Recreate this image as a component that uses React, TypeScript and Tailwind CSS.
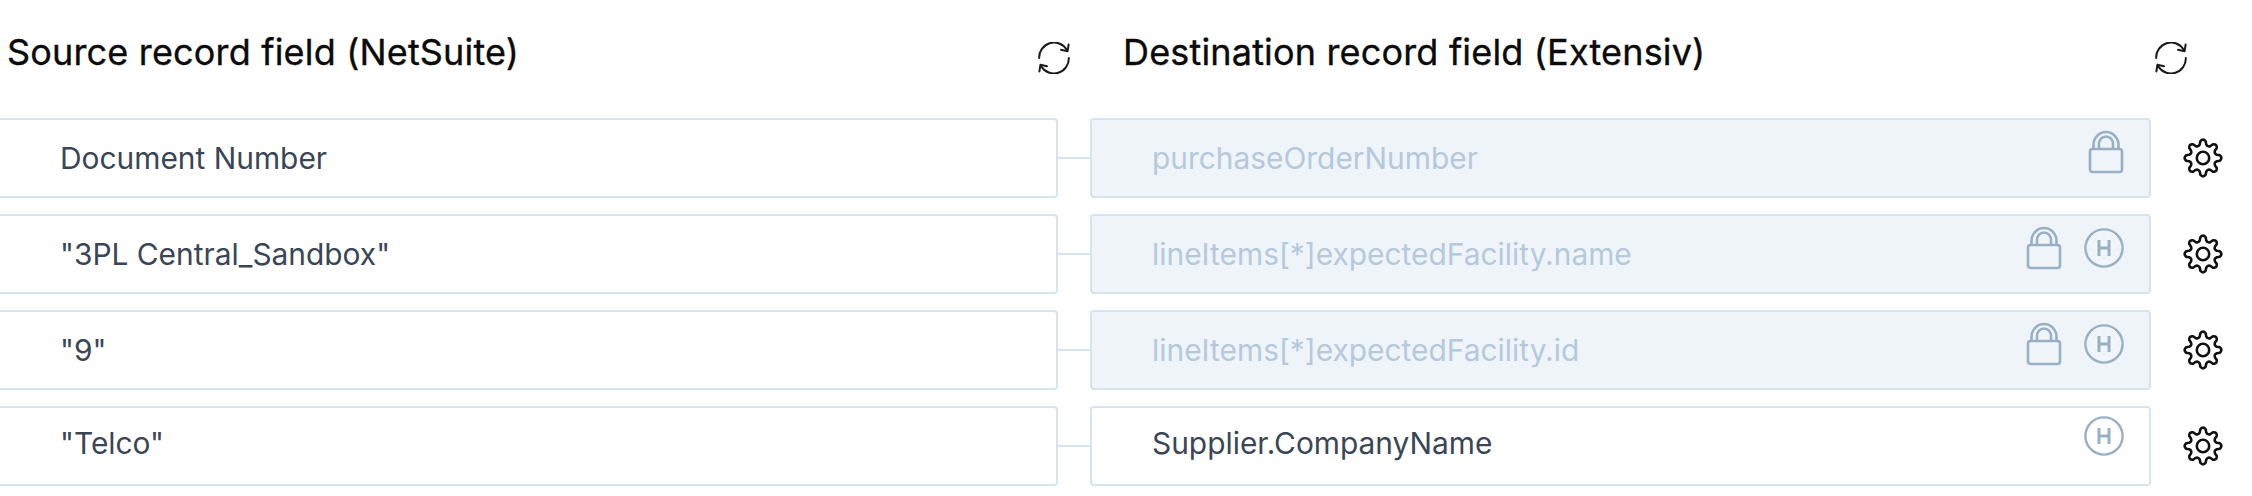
import React from "react";

const gearPath = (() => {
  const cx = 20, cy = 20, R = 18.4, r = 14.2;
  const pt = (rad: number, deg: number) => {
    const a = ((deg - 90) * Math.PI) / 180;
    return `${(cx + rad * Math.cos(a)).toFixed(2)} ${(cy + rad * Math.sin(a)).toFixed(2)}`;
  };
  let d = "";
  for (let i = 0; i < 8; i++) {
    const c = i * 45;
    d += i === 0 ? `M${pt(r, c - 13)}` : ` Q${pt(r - 2.6, c - 22.5)} ${pt(r, c - 13)}`;
    d += ` L${pt(R - 1.4, c - 9)} Q${pt(R + 1.6, c)} ${pt(R - 1.4, c + 9)} L${pt(r, c + 13)}`;
  }
  d += ` Q${pt(r - 2.6, -22.5)} ${pt(r, -13)}Z`;
  return d;
})();

function Gear() {
  return (
    <svg width="40" height="40" viewBox="0 0 40 40" fill="none" stroke="#111" strokeWidth="2.6" strokeLinejoin="round">
      <path d={gearPath} />
      <circle cx="20" cy="20" r="6.2" />
    </svg>
  );
}

function Refresh() {
  return (
    <svg width="32" height="32" viewBox="0 0 32 32" fill="none" stroke="#1a1a1a" strokeWidth="2" strokeLinecap="round" strokeLinejoin="round">
      <path d="M1.2 16A14.8 14.8 0 0 1 28.6 7.6" />
      <path d="M30.8 16A14.8 14.8 0 0 1 3.4 24.4" />
      <path d="M30.6 2.6 L29.6 9.2 L23 7.8" />
      <path d="M1.4 29.4 L2.4 22.8 L9 24.2" />
    </svg>
  );
}

function Lock() {
  return (
    <svg width="36" height="44" viewBox="0 0 36 44" fill="none" stroke="#98afc4" strokeWidth="2.6" strokeLinejoin="round">
      <rect x="2" y="19" width="32" height="23" rx="2.5" />
      <path d="M5.5 19V15a12.5 13 0 0 1 25 0v4" />
      <path d="M11 19v-5a7 7.5 0 0 1 14 0v5" />
    </svg>
  );
}

function HBadge() {
  return (
    <svg width="40" height="40" viewBox="0 0 40 40" fill="none" stroke="#98afc4">
      <circle cx="20" cy="20" r="18.6" strokeWidth="2.4" />
      <path d="M15 12v16M25 12v16M15 20h10" strokeWidth="3" />
    </svg>
  );
}

type Row = { source: string; dest: string; lock: boolean; h: boolean };

const rows: Row[] = [
  { source: "Document Number", dest: "purchaseOrderNumber", lock: true, h: false },
  { source: '"3PL Central_Sandbox"', dest: "lineItems[*]expectedFacility.name", lock: true, h: true },
  { source: '"9"', dest: "lineItems[*]expectedFacility.id", lock: true, h: true },
  { source: '"Telco"', dest: "Supplier.CompanyName", lock: false, h: true },
];

export default function App() {
  return (
    <div className="w-[2252px] h-[496px] overflow-hidden bg-white font-['Inter',sans-serif]">
      <div className="flex h-[118px]">
        <div className="w-[1037px] -ml-px pl-2 pt-[31px] text-[36px] leading-[42px] font-normal tracking-[0.17px] [-webkit-text-stroke:0.35px_#0b0b0b] text-[#0b0b0b] whitespace-nowrap">
          Source record field (NetSuite)
        </div>
        <div className="w-[87px] pt-[42px] pl-[2px]">
          <Refresh />
        </div>
        <div className="w-[1033px] pt-[31px] text-[36px] leading-[42px] font-normal tracking-[0.17px] [-webkit-text-stroke:0.35px_#0b0b0b] text-[#0b0b0b] whitespace-nowrap">
          Destination record field (Extensiv)
        </div>
        <div className="pt-[42px] -ml-px">
          <Refresh />
        </div>
      </div>
      <div className="flex flex-col gap-4">
        {rows.map((r) => (
          <div key={r.dest} className="flex items-center h-20">
            <div
              className={`-ml-5 w-[1078px] h-20 flex items-center pl-[78px] bg-white border-2 border-[#d6e4ef] rounded-[4px] text-[29.9px] text-[#3a4656] whitespace-nowrap ${
                r.lock ? "" : "pb-[6px]"
              }`}
            >
              {r.source}
            </div>
            <div className="w-[32px] h-[2px] bg-[#d6e4ef]" />
            <div
              className={`w-[1061px] h-20 flex items-center justify-between pl-[60px] pr-[25px] border-2 border-[#d6e4ef] rounded-[4px] text-[29.9px] whitespace-nowrap ${
                r.lock ? "bg-[#eff4f9] text-[#b5c9dc]" : "bg-white text-[#3a4656]"
              }`}
            >
              <span className={r.lock ? "" : "pb-[6px]"}>{r.dest}</span>
              <div className={`flex items-center gap-[22px] self-start ${r.lock ? "pt-[10px]" : "pt-2"}`}>
                {r.lock && <Lock />}
                {r.h && <HBadge />}
              </div>
            </div>
            <div className="ml-[32px]">
              <Gear />
            </div>
          </div>
        ))}
      </div>
    </div>
  );
}
